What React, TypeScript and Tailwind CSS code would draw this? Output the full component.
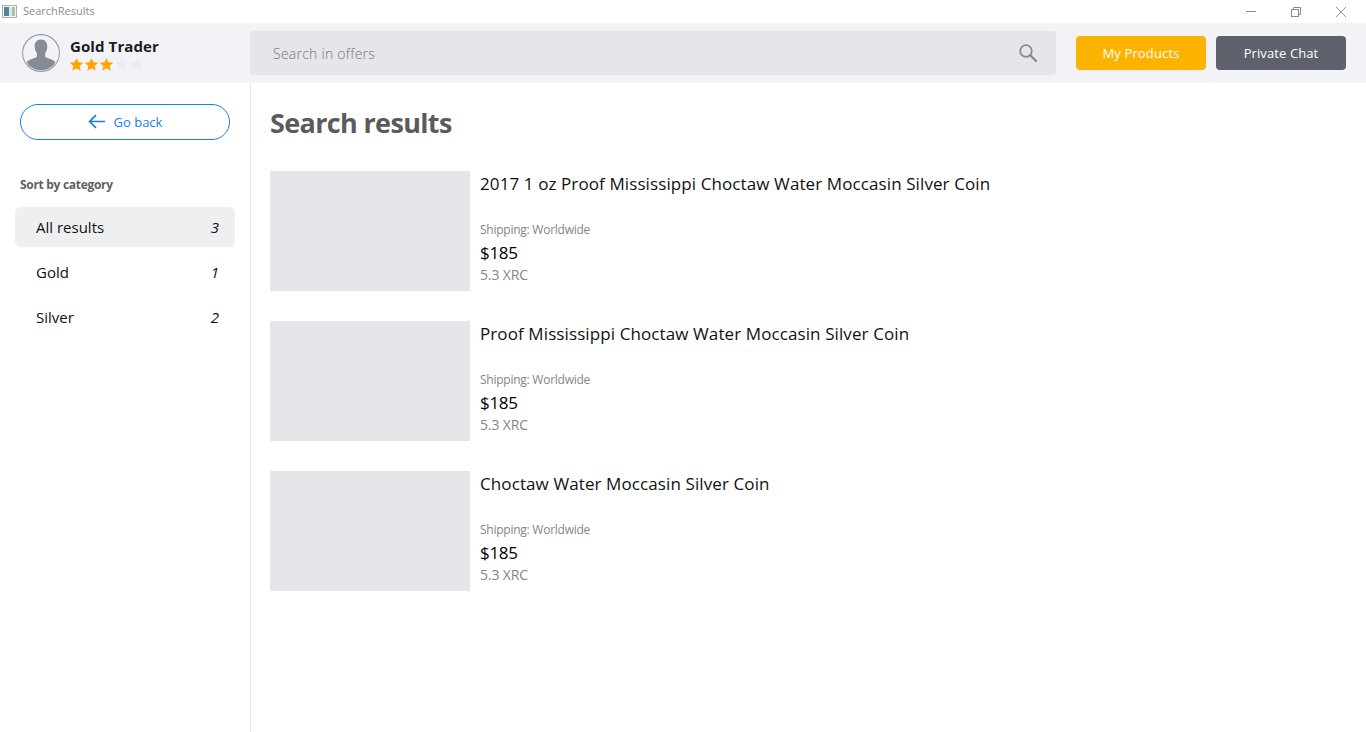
const categories = [
  { name: 'All results', count: 3, active: true },
  { name: 'Gold', count: 1, active: false },
  { name: 'Silver', count: 2, active: false },
]

const offers = [
  '2017 1 oz Proof Mississippi Choctaw Water Moccasin Silver Coin',
  'Proof Mississippi Choctaw Water Moccasin Silver Coin',
  'Choctaw Water Moccasin Silver Coin',
]

function Star({ filled }: { filled: boolean }) {
  return (
    <svg viewBox="0 0 24 24" className={`w-[15px] h-[15px] ${filled ? 'text-[#ffa500]' : 'text-[#ececf0]'}`} fill="currentColor">
      <path d="M12 1.5l3.2 7 7.6.8-5.7 5.1 1.6 7.5L12 18.1l-6.7 3.8 1.6-7.5L1.2 9.3l7.6-.8z" />
    </svg>
  )
}

function Avatar() {
  return (
    <svg viewBox="0 0 38 38" className="w-[38px] h-[38px] shrink-0">
      <defs>
        <clipPath id="avatar-clip">
          <circle cx="19" cy="19" r="17.2" />
        </clipPath>
      </defs>
      <g clipPath="url(#avatar-clip)" fill="#858c96">
        <path d="M19 5.5c-4 0-6.3 2.8-6.3 6.8 0 2.8.8 5.3 2.2 7v3.4c-1.4 1.400-7 2.600-9.200 4.300-1.700 1.300-2.200 4-2.200 11h31c0-7-.5-9.700-2.200-11-2.200-1.700-7.800-2.900-9.200-4.300v-3.400c1.400-1.700 2.200-4.200 2.200-7 0-4-2.300-6.800-6.300-6.800z" />
      </g>
      <circle cx="19" cy="19" r="18.4" fill="none" stroke="#989ea6" strokeWidth="1.1" />
    </svg>
  )
}

function AppIcon() {
  return (
    <svg viewBox="0 0 15 13" className="ml-[2px] w-[15px] h-[13px]">
      <rect x="0.5" y="0.5" width="14" height="12" fill="#f4f6f6" stroke="#a9b0b2" />
      <rect x="2" y="2" width="5" height="9" fill="#4f8a94" />
      <rect x="7" y="2" width="3" height="9" fill="#dfe7e6" />
      <rect x="10" y="2" width="3" height="9" fill="#9fc7a8" />
    </svg>
  )
}

function RestoreIcon() {
  return (
    <svg viewBox="0 0 10 10" className="w-[10px] h-[10px]" fill="none" stroke="#8a8a8a" strokeWidth="1">
      <rect x="0.5" y="2.5" width="7" height="7" />
      <path d="M2.5 2.5v-2h7v7h-2" />
    </svg>
  )
}

function CloseIcon() {
  return (
    <svg viewBox="0 0 10 10" className="w-[10px] h-[10px]" fill="none" stroke="#8a8a8a" strokeWidth="0.9">
      <path d="M0 0l10 10M10 0L0 10" />
    </svg>
  )
}

function SearchIcon() {
  return (
    <svg viewBox="0 0 18 18" className="w-[18px] h-[18px]" fill="none" stroke="#858c96">
      <circle cx="7" cy="7" r="5.8" strokeWidth="1.8" />
      <path d="M11.5 11.5L17 17" strokeWidth="2.4" strokeLinecap="round" />
    </svg>
  )
}

function BackArrow() {
  return (
    <svg viewBox="0 0 16 14" className="w-[17px] h-[15px] -mt-[2px]" fill="none" stroke="currentColor" strokeWidth="1.6">
      <path d="M16 7H1.5M7.5 1L1.5 7l6 6" />
    </svg>
  )
}

export default function App() {
  return (
    <div className="flex flex-col h-[732px] w-[1366px] overflow-hidden bg-white font-['Open_Sans',sans-serif]">
      <div className="flex items-center h-[23px] shrink-0">
        <AppIcon />
        <span className="ml-[6px] text-[11px] text-[#8c8c8c]">SearchResults</span>
        <div className="ml-auto flex items-center pr-[20px] gap-[35px]">
          <div className="w-[10px] h-px bg-[#8a8a8a]" />
          <RestoreIcon />
          <CloseIcon />
        </div>
      </div>

      <header className="flex items-center h-[60px] shrink-0 bg-[#f2f2f7] pr-[20px]">
        <div className="flex items-center w-[250px] pl-[22px] gap-[10px]">
          <Avatar />
          <div className="flex flex-col pt-[2px]">
            <span className="text-[15px] leading-[18px] font-bold text-[#1c1c1c] tracking-[0.1px]">Gold Trader</span>
            <div className="flex mt-[2px] -ml-[1px]">
              {[true, true, true, false, false].map((filled, i) => (
                <Star key={i} filled={filled} />
              ))}
            </div>
          </div>
        </div>
        <div className="flex items-center justify-between w-[806px] h-[44px] rounded bg-[#e5e5ea] pl-[23px] pr-[19px]">
          <span className="pt-[1px] text-sm font-light text-[#77777c] tracking-[0.25px]">Search in offers</span>
          <SearchIcon />
        </div>
        <button className="ml-[20px] w-[130px] h-[34px] pt-[1px] rounded bg-[#fbb300] text-white text-[13px] tracking-[0.15px]">My Products</button>
        <button className="ml-[10px] w-[130px] h-[34px] pt-[1px] rounded bg-[#5c616c] text-white text-[13px] tracking-[0.1px]">Private Chat</button>
      </header>

      <div className="flex flex-1 min-h-0">
        <aside className="w-[251px] shrink-0 border-r border-[#e8e8ec] pt-[21px]">
          <button className="ml-[20px] flex items-center justify-center gap-[9px] w-[210px] h-[36px] pt-[1px] rounded-full border border-[#1a7df0] text-[#1a7df0] text-[13px]">
            <BackArrow />
            Go back
          </button>
          <h2 className="ml-[20px] mt-[37px] text-[12px] leading-[16px] font-bold text-[#5f5f5f] tracking-[-0.3px]">Sort by category</h2>
          <ul className="mt-[14px] ml-[15px] w-[220px] flex flex-col gap-[5px]">
            {categories.map((c) => (
              <li
                key={c.name}
                className={`flex items-center justify-between h-[40px] pl-[21px] pr-[16px] rounded-md text-[15px] text-[#111] ${c.active ? 'bg-[#eeeff1]' : ''}`}
              >
                <span>{c.name}</span>
                <span className="italic">{c.count}</span>
              </li>
            ))}
          </ul>
        </aside>

        <main className="flex-1 pl-[19px] pt-[20px]">
          <h1 className="text-[27px] leading-[40px] font-bold text-[#5b5b5b] tracking-[-0.65px]">Search results</h1>
          <div className="mt-[28px] flex flex-col gap-[30px]">
            {offers.map((title) => (
              <article key={title} className="flex gap-[10px] h-[120px]">
                <div className="w-[200px] h-[120px] bg-[#e5e5ea]" />
                <div className="flex flex-col">
                  <h3 className="text-[17px] leading-[26px] text-[#111] tracking-[0.1px]">{title}</h3>
                  <p className="mt-[25px] text-[12px] leading-[16px] text-[#858585] tracking-[-0.25px]">Shipping: Worldwide</p>
                  <p className="mt-[3px] text-[17px] leading-[24px] font-medium text-black tracking-[-0.3px]">$185</p>
                  <p className="mt-[1px] text-[14px] leading-[18px] text-[#858585] tracking-[-0.15px]">5.3 XRC</p>
                </div>
              </article>
            ))}
          </div>
        </main>
      </div>
    </div>
  )
}
